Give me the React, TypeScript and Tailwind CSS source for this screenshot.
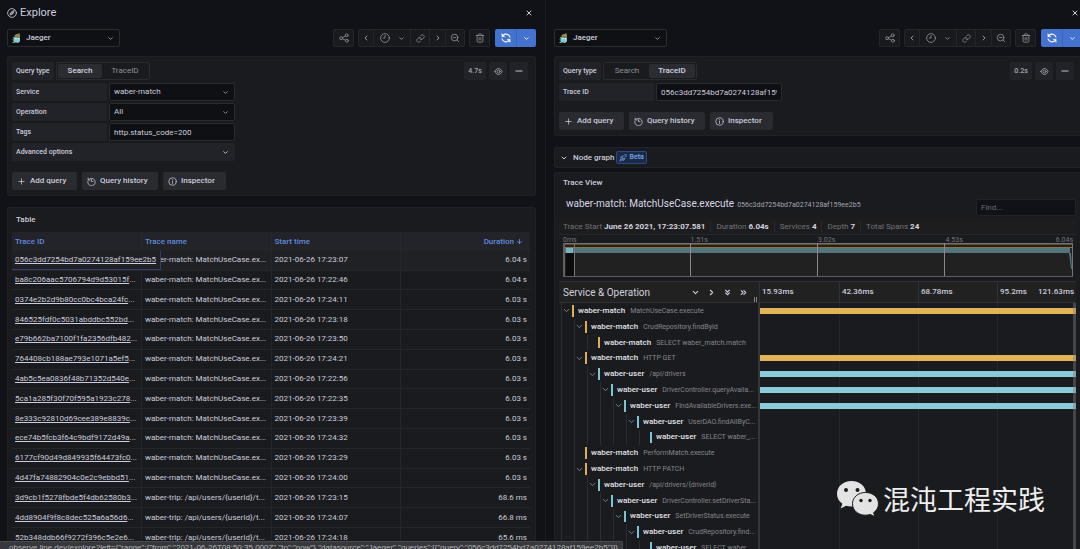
import React from 'react'
import {
  ArrowDown,
  ChevronDown,
  ChevronLeft,
  ChevronRight,
  ChevronsDown,
  ChevronsRight,
  Link,
  Minus,
  Plus,
  Rocket,
  X,
  ZoomOut,
} from 'lucide-react'

type TraceRow = {
  id: string
  name: string
  start: string
  duration: string
}

type Span = {
  depth: number
  service: string
  operation: string
  leaf?: boolean
  bar?: boolean
}

const MATCH = 'waber-match: MatchUseCase.ex...'
const TRIP = 'waber-trip: /api/users/{userId}/t...'
const TRACE_ID = '056c3dd7254bd7a0274128af159ee2b5'

const traces: TraceRow[] = [
  { id: TRACE_ID, name: MATCH, start: '17:23:07', duration: '6.04 s' },
  { id: 'ba8c206aac5706794d9d53015f', name: MATCH, start: '17:22:46', duration: '6.04 s' },
  { id: '0374e2b2d9b80cc0bc4bca24fc', name: MATCH, start: '17:24:11', duration: '6.03 s' },
  { id: '846525fdf0c5031abddbc552bd', name: MATCH, start: '17:23:18', duration: '6.03 s' },
  { id: 'e79b662ba7100f1fa2356dfb482', name: MATCH, start: '17:23:50', duration: '6.03 s' },
  { id: '764408cb188ae793e1071a5ef5', name: MATCH, start: '17:24:21', duration: '6.03 s' },
  { id: '4ab5c5ea0836f48b71352d540e', name: MATCH, start: '17:22:56', duration: '6.03 s' },
  { id: '5ca1a285f30f70f595a1923c278', name: MATCH, start: '17:22:35', duration: '6.03 s' },
  { id: '8e333c92810d69cee389e8839c', name: MATCH, start: '17:23:39', duration: '6.03 s' },
  { id: 'ece74b5fcb3f64c9bdf9172d49a', name: MATCH, start: '17:24:32', duration: '6.03 s' },
  { id: '6177cf90d49d849935f64473fc0', name: MATCH, start: '17:23:29', duration: '6.03 s' },
  { id: '4d47fa74882904c0e2c9ebbd51', name: MATCH, start: '17:24:00', duration: '6.03 s' },
  { id: '3d9cb1f5278fbde5f4db62580b3', name: TRIP, start: '17:23:15', duration: '68.6 ms' },
  { id: '4dd8904f9f8c8dec525a6a56d6', name: TRIP, start: '17:24:07', duration: '66.8 ms' },
  { id: '52b348ddb66f9272f396c5e2e6', name: TRIP, start: '17:24:18', duration: '65.6 ms' },
]

const spans: Span[] = [
  { depth: 0, service: 'waber-match', operation: 'MatchUseCase.execute', bar: true },
  { depth: 1, service: 'waber-match', operation: 'CrudRepository.findById' },
  { depth: 2, service: 'waber-match', operation: 'SELECT waber_match.match', leaf: true },
  { depth: 1, service: 'waber-match', operation: 'HTTP GET', bar: true },
  { depth: 2, service: 'waber-user', operation: '/api/drivers', bar: true },
  { depth: 3, service: 'waber-user', operation: 'DriverController.queryAvaila...', bar: true },
  { depth: 4, service: 'waber-user', operation: 'FindAvailableDrivers.exe...', bar: true },
  { depth: 5, service: 'waber-user', operation: 'UserDAO.findAllByC...' },
  { depth: 6, service: 'waber-user', operation: 'SELECT waber_...', leaf: true },
  { depth: 1, service: 'waber-match', operation: 'PerformMatch.execute', leaf: true },
  { depth: 1, service: 'waber-match', operation: 'HTTP PATCH' },
  { depth: 2, service: 'waber-user', operation: '/api/drivers/{driverId}' },
  { depth: 3, service: 'waber-user', operation: 'DriverController.setDriverSta...' },
  { depth: 4, service: 'waber-user', operation: 'SetDriverStatus.execute' },
  { depth: 5, service: 'waber-user', operation: 'CrudRepository.find...' },
  { depth: 6, service: 'waber-user', operation: 'SELECT waber_...', leaf: true },
]

type IconProps = { size?: number; children: React.ReactNode }

const Icon: React.FC<IconProps> = ({ size = 10, children }) => (
  <svg
    width={size}
    height={size}
    viewBox="0 0 24 24"
    fill="none"
    stroke="currentColor"
    strokeWidth="2"
    strokeLinecap="round"
    strokeLinejoin="round"
    className="shrink-0"
    aria-hidden="true"
  >
    {children}
  </svg>
)

const CompassIcon = () => (
  <Icon>
    <circle cx="12" cy="12" r="10.5" />
    <path d="M17 7l-3 7-7 3 3-7z" />
    <circle cx="12" cy="12" r="1" />
  </Icon>
)

const ShareIcon = () => (
  <Icon>
    <circle cx="5" cy="12.5" r="3.5" />
    <circle cx="18.5" cy="5.5" r="3.5" />
    <circle cx="19" cy="18.5" r="3.5" />
    <path d="M8.500 11l7-4M8.500 14l7 3" />
  </Icon>
)

const ClockIcon = () => (
  <Icon>
    <circle cx="12" cy="12" r="10.5" />
    <path d="M12 6v6H8" />
  </Icon>
)

const TrashIcon = () => (
  <Icon>
    <path d="M3 6h18M5 6v13a3 3 0 0 0 3 3h8a3 3 0 0 0 3-3V6M8 6V4a2 2 0 0 1 2-2h4a2 2 0 0 1 2 2v2M10 11v6M14 11v6" />
  </Icon>
)

const SyncIcon = () => (
  <Icon>
    <path d="M21.500 10A10 10 0 0 0 5 5.500M2.500 14A10 10 0 0 0 19 18.500" strokeWidth="2.500" />
    <path d="M2 2v7h7zM22 22v-7h-7z" fill="currentColor" strokeWidth="1" />
  </Icon>
)

const HistoryIcon = () => (
  <Icon size={9}>
    <path d="M3 3v5h5M3.500 8A10 10 0 1 1 2 12M12 7v5h4" />
  </Icon>
)

const InfoIcon = () => (
  <Icon size={9}>
    <circle cx="12" cy="12" r="10" />
    <path d="M12 11v6M12 7v0.500" />
  </Icon>
)

const EyeIcon = () => (
  <Icon size={9}>
    <path d="M2.500 12C5 6.500 8 4 12 4s7 2.500 9.500 8C19 17.500 16 20 12 20S5 17.500 2.500 12z" />
    <circle cx="12" cy="12" r="4" />
  </Icon>
)

const JaegerLogo = () => (
  <svg width="9" height="10" viewBox="0 0 18 20" aria-hidden="true">
    <path d="M5 4l8-3 2-1 1 6-10 2z" fill="#8f8a4e" />
    <path d="M2 8l14-2v2L2 10z" fill="#a99c5c" />
    <path d="M4 9h12v8l-3 2H5l-2-2z" fill="#7fcbd3" />
    <circle cx="8" cy="11" r="1.500" fill="#eef4f4" />
    <circle cx="13" cy="11" r="1.500" fill="#eef4f4" />
    <path d="M1 12l3-2v6H2z" fill="#4b8f8c" />
    <path d="M1 18h4v2H1zM9 18h4v2H9z" fill="#8fa58a" />
  </svg>
)

const toolButton =
  'flex items-center justify-center bg-[#181a1e] border-[#24262b] text-[#8f9099]'

const Toolbar = () => (
  <div className="flex h-[18px] items-stretch">
    <div className="relative flex w-[113px]">
      <select
        aria-label="Data source"
        className="h-[18px] w-full appearance-none rounded-xs border border-[#2a2c31] bg-[#0f1014] pl-[18px] text-[8px] font-medium text-[#ccccdc]"
      >
        <option>Jaeger</option>
      </select>
      <div className="pointer-events-none absolute inset-0 flex items-center justify-between pl-[5px] pr-[6px]">
        <JaegerLogo />
        <ChevronDown size={7} strokeWidth={3} className="text-[#9a9ba5]" />
      </div>
    </div>
    <div className="ml-auto flex gap-1">
      <button aria-label="Share" className={`${toolButton} w-[21px] rounded-xs border`}>
        <ShareIcon />
      </button>
      <div className="flex">
        <button aria-label="Back" className={`${toolButton} w-4 rounded-l-xs border`}>
          <ChevronLeft size={8} strokeWidth={3} />
        </button>
        <button aria-label="Time range" className={`${toolButton} w-9 gap-2 border-y`}>
          <ClockIcon />
          <ChevronDown size={7} strokeWidth={3} />
        </button>
        <button aria-label="Sync times" className={`${toolButton} w-5 border`}>
          <Link size={9} strokeWidth={2} />
        </button>
        <button aria-label="Forward" className={`${toolButton} w-[15px] border-y`}>
          <ChevronRight size={8} strokeWidth={3} />
        </button>
        <button aria-label="Zoom out" className={`${toolButton} w-5 rounded-r-xs border`}>
          <ZoomOut size={10} />
        </button>
      </div>
      <button aria-label="Clear all" className={`${toolButton} w-[21px] rounded-xs border`}>
        <TrashIcon />
      </button>
      <div className="ml-px flex rounded-xs bg-[#4472cf] text-white">
        <button aria-label="Run query" className="flex w-[21px] items-center justify-center">
          <SyncIcon />
        </button>
        <button
          aria-label="Refresh interval"
          className="flex w-5 items-center justify-center border-l border-[#3c66bd]"
        >
          <ChevronDown size={7} strokeWidth={3} />
        </button>
      </div>
    </div>
  </div>
)

const fieldLabel =
  'flex h-[18px] items-center rounded-xs bg-[#222328] pl-1 text-[7px] font-medium text-[#ccccdc]'

const field =
  'h-[18px] w-full rounded-xs border border-[#2a2b31] bg-[#0f1014] px-1 text-[8px] text-[#ccccdc]'

const Field: React.FC<{ id: string; label: string; children: React.ReactNode }> = ({
  id,
  label,
  children,
}) => (
  <div className="flex gap-[2px]">
    <label htmlFor={id} className={`${fieldLabel} w-[95px]`}>
      {label}
    </label>
    <div className="relative flex w-[126px]">{children}</div>
  </div>
)

const SelectField: React.FC<{ id: string; value: string }> = ({ id, value }) => (
  <>
    <select id={id} className={`${field} appearance-none`}>
      <option>{value}</option>
    </select>
    <ChevronDown
      size={7}
      strokeWidth={3}
      className="pointer-events-none absolute right-[6px] top-[6px] text-[#9a9ba5]"
    />
  </>
)

const QueryPanel: React.FC<{
  prefix: string
  mode: 'Search' | 'TraceID'
  time: string
  children: React.ReactNode
}> = ({ prefix, mode, time, children }) => (
  <section className="mt-[9px] rounded-xs border border-[#202126] bg-[#1a1b1f] py-[5px] pl-1 pr-[7px]">
    <div className="flex items-start gap-[3px]">
      <div role="radiogroup" aria-labelledby={`${prefix}-type`} className="flex gap-[2px]">
        <span id={`${prefix}-type`} className={`${fieldLabel} w-[42px]`}>
          Query type
        </span>
        <div className="flex h-[18px] rounded-xs border border-[#2a2b31] p-px text-[8px]">
          {['Search', 'TraceID'].map((option) => (
            <label
              key={option}
              className="relative flex w-11 items-center justify-center rounded-xs text-[#8e8f99] last:w-[46px] has-checked:bg-[#2b2c32] has-checked:font-medium has-checked:text-[#d4d4e2]"
            >
              <input
                type="radio"
                name={`${prefix}-type`}
                defaultChecked={option === mode}
                className="absolute inset-0 appearance-none"
              />
              {option}
            </label>
          ))}
        </div>
      </div>
      <span className="ml-auto flex h-[18px] w-[22px] items-center justify-center rounded-xs bg-[#222328] text-[7px] font-medium text-[#a5a6b1]">
        {time}
      </span>
      <button
        aria-label="Disable query"
        className="flex h-[18px] w-[18px] items-center justify-center rounded-xs bg-[#222328] text-[#b0b1bc]"
      >
        <EyeIcon />
      </button>
      <button
        aria-label="Remove query"
        className="flex h-[18px] w-[18px] items-center justify-center rounded-xs bg-[#222328] text-[#8e8f99]"
      >
        <Minus size={10} strokeWidth={4} />
      </button>
    </div>
    <div className="mt-[3px] flex flex-col gap-[2px]">{children}</div>
    <div className="mt-[11px] flex gap-[5px] text-[8px] font-medium text-[#ccccdc]">
      <button className="flex h-[18px] w-[65px] items-center gap-1 rounded-xs bg-[#2a2b30] pl-[5px]">
        <Plus size={9} /> Add query
      </button>
      <button className="flex h-[18px] w-[76px] items-center gap-1 rounded-xs bg-[#2a2b30] pl-[5px]">
        <HistoryIcon /> Query history
      </button>
      <button className="flex h-[18px] w-[63px] items-center gap-1 rounded-xs bg-[#2a2b30] pl-[5px]">
        <InfoIcon /> Inspector
      </button>
    </div>
  </section>
)

const TraceTable = () => (
  <section className="mt-[11px] rounded-xs border border-[#202126] bg-[#1a1b1f] pl-1 pr-[5px]">
    <h2 className="flex h-6 items-center pl-1 text-[8px] font-medium text-[#ccccdc]">Table</h2>
    <table className="h-[316px] w-full table-fixed border-collapse text-[8px] text-[#ccccdc]">
      <thead>
        <tr className="h-[19px] bg-[#222429] text-left text-[#6e9fff]/85">
          <th className="border-r border-[#27282d] px-[3px] font-medium">Trace ID</th>
          <th className="border-r border-[#27282d] px-[3px] font-medium">Trace name</th>
          <th className="border-r border-[#27282d] px-[3px] font-medium">Start time</th>
          <th className="px-[7px] font-medium">
            <span className="flex items-center justify-end gap-[2px]">
              Duration <ArrowDown size={7} strokeWidth={3} />
            </span>
          </th>
        </tr>
      </thead>
      <tbody>
        {traces.map((row, index) => (
          <tr key={row.id} className="border-b border-[#25262b] first:bg-[#202125]">
            <td className="relative whitespace-nowrap border-r border-[#25262b] px-[3px]">
              {index === 0 ? (
                <a
                  href="#trace"
                  className="absolute inset-y-0 left-0 z-10 flex items-center border-b border-r border-[#2c4168] bg-[#202125] pl-[3px] pr-1 underline"
                >
                  {row.id}
                </a>
              ) : (
                <>
                  <a href="#trace" className="underline">
                    {row.id}
                  </a>
                  ...
                </>
              )}
            </td>
            <td className="overflow-hidden whitespace-nowrap border-r border-[#25262b] px-[3px]">
              {row.name}
            </td>
            <td className="whitespace-nowrap border-r border-[#25262b] px-[3px]">
              2021-06-26 {row.start}
            </td>
            <td className="px-[3px] text-right">{row.duration}</td>
          </tr>
        ))}
      </tbody>
    </table>
  </section>
)

const summary = [
  ['Trace Start', 'June 26 2021, 17:23:07.581'],
  ['Duration', '6.04s'],
  ['Services', '4'],
  ['Depth', '7'],
  ['Total Spans', '24'],
]

const Minimap = () => (
  <svg
    viewBox="0 0 510 34"
    preserveAspectRatio="none"
    className="block h-[34px] w-full"
    aria-hidden="true"
  >
    <rect width="510" height="34" fill="#212121" />
    <rect width="510" height="1" fill="#747474" />
    <rect y="1" width="510" height="1" fill="#5d4e31" />
    <rect y="4" width="510" height="1" fill="#8f723d" />
    <rect y="5" width="507" height="5" fill="#54757b" />
    <path d="M506 10h2l1 16h-1z" fill="#54757b" />
    <rect x="3" y="10" width="8" height="23" fill="#0b0b0b" />
    <rect x="3" y="5" width="7" height="5" fill="#78b5c1" />
    <rect width="2" height="34" fill="#5f5f5f" />
    <rect x="11" width="1" height="34" fill="#777777" />
    <rect x="127" width="1" height="34" fill="#8a8a8a" />
    <rect x="254" width="1" height="34" fill="#8a8a8a" />
    <rect x="381" width="1" height="34" fill="#8a8a8a" />
    <rect x="509" width="1" height="34" fill="#747474" />
    <rect y="33" width="510" height="1" fill="#5f5f5f" />
  </svg>
)

const SpanRow: React.FC<{ span: Span }> = ({ span }) => {
  const isMatch = span.service === 'waber-match'
  return (
    <div className="flex min-h-0">
      <div className="flex w-[205px] shrink-0 items-stretch overflow-hidden border-r-2 border-[#35363a] pl-[6px]">
        {Array.from({ length: span.depth }, (_, i) => (
          <span key={i} className="w-[13px] shrink-0 border-l border-[#2c2d31]" />
        ))}
        <span className="flex w-[11px] shrink-0 items-center border-l border-[#2c2d31] text-[#9a9ba5]">
          {!span.leaf && <ChevronDown size={9} />}
        </span>
        <span
          className={`my-[2px] w-[2px] shrink-0 ${isMatch ? 'bg-[#ddae52]' : 'bg-[#7fc4d1]'}`}
        />
        <span className="ml-1 self-center whitespace-nowrap text-[7px] leading-3 text-[#85868c]">
          <span className="mr-[5px] text-[8px] font-medium text-[#e2e2ea]">{span.service}</span>
          {span.operation}
        </span>
      </div>
      <div className="relative grid grow grid-cols-4">
        {[0, 1, 2, 3].map((n) => (
          <span key={n} className="border-l border-[#26272b] first:border-l-0" />
        ))}
        {span.bar && (
          <span
            className={`absolute inset-x-0 top-[5px] h-[6px] ${
              isMatch ? 'bg-[#e3b457]' : 'bg-[#89cbd9]'
            }`}
          />
        )}
        <span className="absolute inset-y-0 right-0 w-[3px] bg-[#77787c]/45" />
      </div>
    </div>
  )
}

const TraceView = () => (
  <section className="mt-1 rounded-xs border border-[#202126] bg-[#1a1b1f] pr-[5px]">
    <h2 className="flex h-5 items-center pl-2 text-[8px] font-medium text-[#ccccdc]">
      Trace View
    </h2>
    <div className="flex h-[26px] items-start pl-[11px]">
      <h3 className="text-[10px] leading-[22px] text-[#d8d8e4]">
        waber-match: MatchUseCase.execute
        <small className="ml-[3px] text-[7px] text-[#a5a6b1]">{TRACE_ID}</small>
      </h3>
      <input
        type="text"
        aria-label="Find"
        placeholder="Find..."
        className="ml-auto mt-[6px] h-[17px] w-[100px] rounded-xs border border-[#222329] bg-[#111217] px-1 text-[8px] placeholder:text-[#6b6c75]"
      />
    </div>
    <dl className="ml-1 flex h-4 items-center border-b border-[#26272a] bg-[#1d1d1f] text-[8px]">
      {summary.map(([label, value]) => (
        <div
          key={label}
          className="flex gap-[2px] border-r border-[#28292c] px-[5px] leading-[10px] first:pl-1 last:border-r-0"
        >
          <dt className="text-[#717278]">{label}</dt>
          <dd className="font-bold text-[#d4d4de]">{value}</dd>
        </div>
      ))}
    </dl>
    <div className="ml-2 mr-[3px]">
      <div className="grid h-2 grid-cols-4 text-[7px] leading-[10px] text-[#75767c]">
        <span>0ms</span>
        <span>1.51s</span>
        <span>3.02s</span>
        <span className="flex justify-between">
          4.53s <span>6.04s</span>
        </span>
      </div>
      <Minimap />
    </div>
    <div className="ml-1 mt-1 flex h-[22px] border-y border-[#303134] bg-[#212122]">
      <div className="flex w-[201px] shrink-0 items-center border-r border-[#303134] pl-1">
        <h3 className="text-[10px] text-[#d0d0da]">Service &amp; Operation</h3>
        <div className="ml-auto flex gap-[7px] text-[#ccccdc]">
          <button aria-label="Expand one level">
            <ChevronDown size={9} strokeWidth={3} />
          </button>
          <button aria-label="Collapse one level">
            <ChevronRight size={9} strokeWidth={3} />
          </button>
          <button aria-label="Expand all">
            <ChevronsDown size={9} strokeWidth={3} />
          </button>
          <button aria-label="Collapse all">
            <ChevronsRight size={9} strokeWidth={3} />
          </button>
        </div>
        <span className="ml-[6px] mr-[2px] h-[5px] w-[3px] self-end border-x border-[#84858a]" />
      </div>
      <div className="grid grow grid-cols-4 text-[8px] font-medium leading-5 text-[#ccccdc]">
        <span className="pl-[2px]">15.93ms</span>
        <span className="border-l border-[#303134] pl-[2px]">42.36ms</span>
        <span className="border-l border-[#303134] pl-[2px]">68.78ms</span>
        <span className="flex justify-between border-l border-[#303134] px-[2px]">
          95.2ms <span>121.63ms</span>
        </span>
      </div>
    </div>
    <div className="grid h-[253px] auto-rows-fr">
      {spans.map((span, index) => (
        <SpanRow key={index} span={span} />
      ))}
    </div>
  </section>
)

const Watermark = () => (
  <div className="absolute bottom-8 right-[35px] z-20 flex items-center gap-1 text-[#efefef]">
    <svg width="43" height="37" viewBox="0 0 43 37" aria-hidden="true">
      <path
        d="M15.500 1C7 1 1 6.500 1 13.800c0 4.100 2 7.600 5.400 10L4.600 28.500l5.500-2.800c1.700.5 3.500.8 5.400.8 8.500 0 14.500-5.500 14.500-12.700S24 1 15.500 1z"
        fill="#e3e3e3"
      />
      <path
        d="M29.500 12.500c-7.600 0-13 4.900-13 11.300s5.400 11.400 13 11.400c1.700 0 3.300-.3 4.800-.7l4.600 2.200-1.300-4c3-2.100 4.900-5.200 4.900-8.900 0-6.400-5.400-11.300-13-11.300z"
        fill="#e3e3e3"
        stroke="#1a1b1f"
        strokeWidth="1"
      />
      <circle cx="10" cy="10" r="2" fill="#1a1b1f" />
      <circle cx="21.500" cy="10" r="2" fill="#1a1b1f" />
      <circle cx="25" cy="20.500" r="1.700" fill="#1a1b1f" />
      <circle cx="34" cy="20.500" r="1.700" fill="#1a1b1f" />
    </svg>
    <span className="font-['Noto_Sans_CJK_SC',sans-serif] text-[27px] leading-9">混沌工程实践</span>
  </div>
)

export default function App() {
  return (
    <main className="relative flex h-screen overflow-hidden bg-[#111217] font-[Roboto,sans-serif] text-[#ccccdc]">
      <div className="w-[calc(50%+5px)] shrink-0 pl-[7px] pr-[9px]">
        <header className="flex h-[29px] items-center pb-[3px] pr-[3px]">
          <h1 className="flex items-center gap-[3px] text-[11px]">
            <CompassIcon /> Explore
          </h1>
          <button aria-label="Close left pane" className="ml-auto">
            <X size={8} strokeWidth={3} />
          </button>
        </header>
        <Toolbar />
        <QueryPanel prefix="left" mode="Search" time="4.7s">
          <Field id="service" label="Service">
            <SelectField id="service" value="waber-match" />
          </Field>
          <Field id="operation" label="Operation">
            <SelectField id="operation" value="All" />
          </Field>
          <Field id="tags" label="Tags">
            <input id="tags" type="text" defaultValue="http.status_code=200" className={field} />
          </Field>
          <button className={`${fieldLabel} w-[223px] justify-between pr-[6px]`}>
            Advanced options <ChevronDown size={7} strokeWidth={3} />
          </button>
        </QueryPanel>
        <TraceTable />
      </div>

      <div className="w-[calc(50%+5px)] shrink-0 border-l border-[#1d1e23] pl-2 pr-2">
        <header className="flex h-[29px] items-center justify-end pb-[3px] pr-[3px]">
          <button aria-label="Close right pane">
            <X size={8} strokeWidth={3} />
          </button>
        </header>
        <Toolbar />
        <QueryPanel prefix="right" mode="TraceID" time="0.2s">
          <Field id="trace-id" label="Trace ID">
            <input id="trace-id" type="text" defaultValue={TRACE_ID} className={field} />
          </Field>
        </QueryPanel>
        <section className="mt-[11px] flex h-[21px] items-center rounded-xs border border-[#222328] bg-[#1a1b1f] pl-[5px]">
          <button className="flex items-center gap-[5px] text-[8px] font-medium">
            <ChevronDown size={8} strokeWidth={3} /> Node graph
          </button>
          <span className="ml-[2px] flex h-[13px] items-center gap-[2px] rounded-xs border border-[#284a86] bg-[#1b2a45] px-[2px] text-[7px] font-medium text-[#7ba6ee]">
            <Rocket size={8} /> Beta
          </span>
        </section>
        <TraceView />
      </div>

      <Watermark />
      <div className="absolute bottom-0 left-0 z-30 flex h-2 w-[623px] justify-end overflow-hidden whitespace-nowrap rounded-tr-xs border-r border-t border-[#4a4b4e] bg-[#37383b] pr-1 font-['Liberation_Sans',sans-serif] text-[8px] leading-3 text-[#b5b6ba]">
        {`observe.line.dev/explore?left={"range":{"from":"2021-06-26T08:50:35.000Z","to":"now"},"datasource":"Jaeger","queries":[{"query":"${TRACE_ID}"}]}`}
      </div>
    </main>
  )
}
